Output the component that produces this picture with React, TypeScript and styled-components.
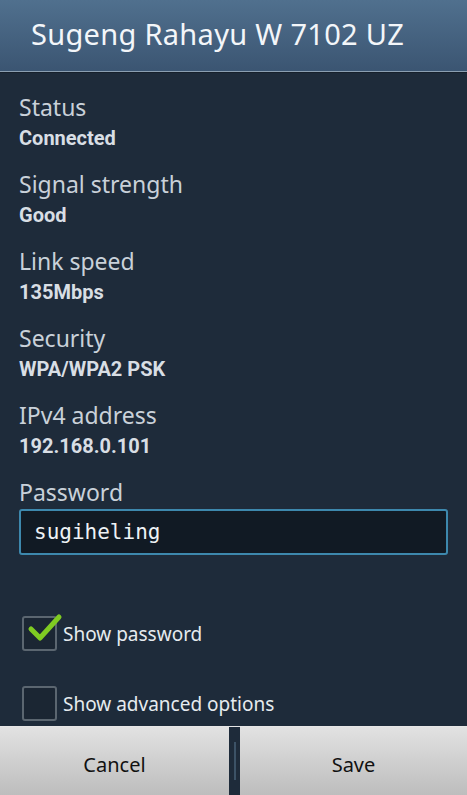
import React from "react";
import styled, { createGlobalStyle } from "styled-components";

const GlobalStyle = createGlobalStyle`
  html, body {
    margin: 0;
    padding: 0;
    background: #1e2b3a;
  }
`;

const Screen = styled.div`
  width: 467px;
  height: 795px;
  display: flex;
  flex-direction: column;
  background: #1e2b3a;
  overflow: hidden;
  font-family: "Noto Sans", "DejaVu Sans", sans-serif;
`;

const Header = styled.header`
  height: 72px;
  flex-shrink: 0;
  display: flex;
  align-items: center;
  padding: 0 31px 4px;
  box-sizing: border-box;
  background: linear-gradient(#50708e, #3b5572);
  border-bottom: 1px solid #8b9fb1;
  box-shadow: 0 1px 0 #16202b;
  color: #f3f6f9;
  font-size: 29px;
  letter-spacing: 0.3px;
`;

const Content = styled.main`
  flex: 1;
  display: flex;
  flex-direction: column;
  padding: 20px 19px 0;
`;

const Field = styled.div`
  display: flex;
  flex-direction: column;
  margin-bottom: 18px;
`;

const Label = styled.div`
  font-size: 23px;
  line-height: 30px;
  color: #c9d1d9;
`;

const Value = styled.div`
  margin-top: 4px;
  font-family: Roboto, "Liberation Sans", sans-serif;
  font-weight: 700;
  font-size: 20px;
  line-height: 25px;
  color: #d8dee4;
`;

const PasswordInput = styled.div`
  margin-top: 2px;
  height: 46px;
  box-sizing: border-box;
  border: 2px solid #3d88ad;
  border-radius: 3px;
  background: #111a24;
  display: flex;
  align-items: center;
  padding: 0 13px;
  font-family: "DejaVu Sans Mono", "Liberation Mono", monospace;
  font-size: 21px;
  color: #eef2f5;
`;

const Options = styled.div`
  display: flex;
  flex-direction: column;
  gap: 35px;
  margin-top: 43px;
  padding-left: 3px;
`;

const CheckRow = styled.label`
  display: flex;
  align-items: center;
  gap: 6px;
  height: 35px;
  font-size: 19px;
  color: #e6ebef;
`;

const Box = styled.span`
  position: relative;
  width: 35px;
  height: 35px;
  box-sizing: border-box;
  border: 2px solid #5b6670;
  border-radius: 3px;
  background: #1b2633;
`;

const Tick = styled.svg`
  position: absolute;
  left: 3px;
  top: -6px;
  width: 36px;
  height: 32px;
`;

const Footer = styled.footer`
  height: 68px;
  flex-shrink: 0;
  display: flex;
  border-top: 1px solid #e6e6e6;
  background: #1e2b3a;
`;

const FooterButton = styled.button<{ $width: number }>`
  width: ${(p) => p.$width}px;
  border: none;
  padding: 7px 0 0;
  background: linear-gradient(#e2e2e2, #bdbdbd);
  font-family: "Noto Sans", "DejaVu Sans", sans-serif;
  font-size: 20px;
  color: #111;
`;

const Divider = styled.div`
  flex: 1;
  display: flex;
  align-items: center;
  justify-content: center;

  span {
    width: 2px;
    height: 38px;
    background: #3c5266;
  }
`;

const info = [
  { label: "Status", value: "Connected" },
  { label: "Signal strength", value: "Good" },
  { label: "Link speed", value: "135Mbps" },
  { label: "Security", value: "WPA/WPA2 PSK" },
  { label: "IPv4 address", value: "192.168.0.101" },
];

const Checkbox = ({ checked, text }: { checked?: boolean; text: string }) => (
  <CheckRow>
    <Box>
      {checked && (
        <Tick viewBox="0 0 36 32">
          <path
            d="M4 17 L13 26 L32 5"
            fill="none"
            stroke="#7fcb22"
            strokeWidth="5"
            strokeLinecap="round"
            strokeLinejoin="round"
          />
        </Tick>
      )}
    </Box>
    {text}
  </CheckRow>
);

export default function App() {
  return (
    <>
      <GlobalStyle />
      <Screen>
        <Header>Sugeng Rahayu W 7102 UZ</Header>
        <Content>
          {info.map((item) => (
            <Field key={item.label}>
              <Label>{item.label}</Label>
              <Value>{item.value}</Value>
            </Field>
          ))}
          <Field>
            <Label>Password</Label>
            <PasswordInput>sugiheling</PasswordInput>
          </Field>
          <Options>
            <Checkbox checked text="Show password" />
            <Checkbox text="Show advanced options" />
          </Options>
        </Content>
        <Footer>
          <FooterButton $width={229}>Cancel</FooterButton>
          <Divider>
            <span />
          </Divider>
          <FooterButton $width={227}>Save</FooterButton>
        </Footer>
      </Screen>
    </>
  );
}
